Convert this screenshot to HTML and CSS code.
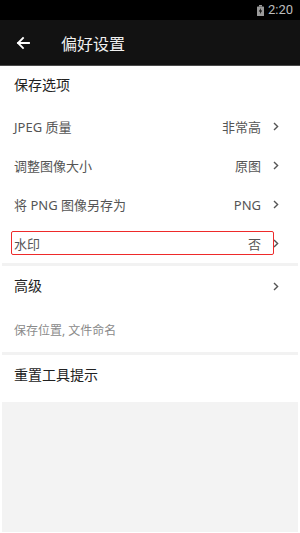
FILE: index.html
```html
<!DOCTYPE html>
<html lang="zh-CN">
<head>
<meta charset="utf-8">
<link rel="stylesheet" href="styles.css">
</head>
<body>
<div class="status">
  <svg class="battery" width="7" height="11" viewBox="0 0 7 11">
    <rect x="2" y="0" width="3" height="1.5" fill="#9a9a9a"/>
    <rect x="0" y="1.5" width="7" height="9.5" rx="0.6" fill="#9a9a9a"/>
    <path d="M4 3 L1.8 6.6 H3.4 L2.8 9.2 L5.2 5.4 H3.6 Z" fill="#000"/>
  </svg>
  <span class="time">2:20</span>
</div>
<div class="appbar">
  <svg class="back" width="14" height="14" viewBox="0 0 14 14">
    <path d="M13 7 H2 M7 2 L2 7 L7 12" fill="none" stroke="#fff" stroke-width="1.8" stroke-linecap="square"/>
  </svg>
  <span class="title">偏好设置</span>
</div>
<div class="content">
  <div class="group">
    <div class="header">保存选项</div>
    <div class="row"><span class="label">JPEG 质量</span><span class="value">非常高</span><svg class="chev" width="6" height="9" viewBox="0 0 6 9"><path d="M1 1 L4.6 4.5 L1 8" fill="none" stroke="#555" stroke-width="1.4"/></svg></div>
    <div class="row"><span class="label">调整图像大小</span><span class="value">原图</span><svg class="chev" width="6" height="9" viewBox="0 0 6 9"><path d="M1 1 L4.6 4.5 L1 8" fill="none" stroke="#555" stroke-width="1.4"/></svg></div>
    <div class="row"><span class="label">将 PNG 图像另存为</span><span class="value">PNG</span><svg class="chev" width="6" height="9" viewBox="0 0 6 9"><path d="M1 1 L4.6 4.5 L1 8" fill="none" stroke="#555" stroke-width="1.4"/></svg></div>
    <div class="row marked"><span class="label">水印</span><span class="value">否</span><svg class="chev" width="6" height="9" viewBox="0 0 6 9"><path d="M1 1 L4.6 4.5 L1 8" fill="none" stroke="#555" stroke-width="1.4"/></svg><span class="highlight"></span></div>
  </div>
  <div class="sep"></div>
  <div class="group adv">
    <div class="adv-top"><span class="header-inline">高级</span><svg class="chev" width="6" height="9" viewBox="0 0 6 9"><path d="M1 1 L4.6 4.5 L1 8" fill="none" stroke="#555" stroke-width="1.4"/></svg></div>
    <div class="sub">保存位置, 文件命名</div>
  </div>
  <div class="sep"></div>
  <div class="group reset">
    <div class="header-inline">重置工具提示</div>
  </div>
  <div class="filler"></div>
</div>
</body>
</html>
```
FILE: styles.css
```css
* { box-sizing: border-box; }
html, body { margin: 0; padding: 0; }
body {
  width: 300px;
  height: 533px;
  background: #fff;
  font-family: "Noto Sans", "Noto Sans CJK SC", sans-serif;
  overflow: hidden;
}
.status {
  height: 20px;
  background: #000;
  display: flex;
  align-items: center;
  justify-content: flex-end;
  padding-right: 7px;
  gap: 4px;
}
.battery { display: block; margin-top: 1px; }
.time {
  font-family: Roboto, "Noto Sans", sans-serif;
  font-size: 13px;
  color: #bdbdbd;
  line-height: 20px;
}
.appbar {
  height: 46px;
  background: #121212;
  border-bottom: 1px solid #4a4a4a;
  display: flex;
  align-items: center;
  padding-left: 16px;
}
.back { display: block; margin-top: 1px; }
.title {
  margin-left: 31px;
  font-family: "Noto Sans CJK SC", sans-serif;
  font-size: 16px;
  color: #f0f0f0;
  line-height: 20px;
  margin-top: 1px;
}
.content {
  padding: 0 2px 1px;
  height: 467px;
  display: flex;
  flex-direction: column;
}
.group { background: #fff; }
.header {
  padding: 9px 12px 12px;
  font-size: 14px;
  line-height: 20px;
  color: #222;
}
.header-inline {
  font-size: 14px;
  line-height: 20px;
  color: #222;
}
.row {
  position: relative;
  height: 39px;
  display: flex;
  align-items: center;
  padding: 0 19px 0 12px;
  font-size: 13px;
  color: #555;
}
.label { flex: 1; }
.value { margin-right: 12px; }
.chev { display: block; }
.highlight {
  position: absolute;
  left: 9px;
  top: 7px;
  width: 263px;
  height: 24px;
  border: 1.5px solid #ee2a2a;
  border-radius: 2px;
}
.sep { height: 3px; background: #f2f2f2; }
.adv { padding: 10px 19px 11px 12px; }
.adv-top {
  display: flex;
  align-items: center;
  justify-content: space-between;
  height: 20px;
}
.sub {
  margin-top: 25px;
  font-size: 12px;
  line-height: 20px;
  color: #8a8a8a;
}
.reset { padding: 10px 12px 17px; }
.filler { flex: 1; background: #f3f3f3; }
```
